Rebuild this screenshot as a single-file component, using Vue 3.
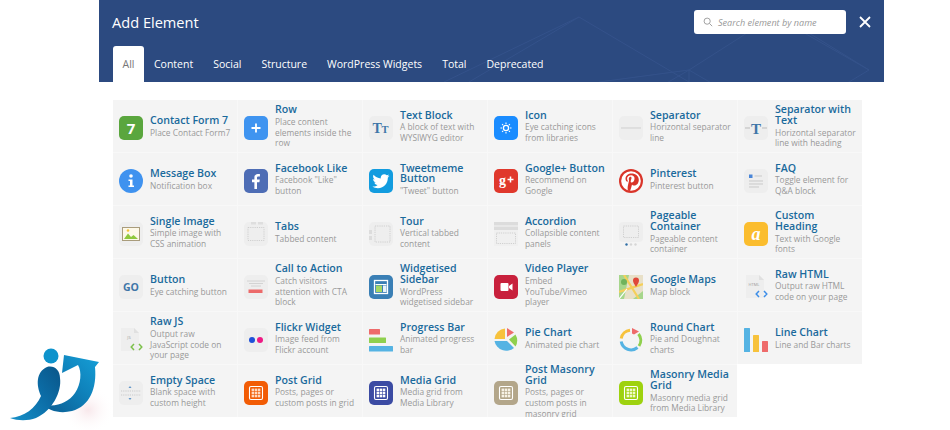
<template>
  <div class="page">
    <div class="modal">
      <header class="head">
        <svg class="pattern" viewBox="0 0 785 82">
          <path d="M370 82 L480 17 L590 82 M345 82 L480 17 M590 70 L648 33 M590 70 L500 82 M590 70 V82 M590 70 L650 105 M590 70 L530 105 M710 33 L770 70 L720 100 M770 70 L700 30" />
        </svg>
        <div class="top">
          <h1>Add Element</h1>
          <div class="tools">
            <div class="search">
              <svg viewBox="0 0 12 12" class="glass"><circle cx="5" cy="5" r="3.7" /><path d="M7.8 7.8 L11 11" /></svg>
              <span>Search element by name</span>
            </div>
            <svg viewBox="0 0 12 12" class="close"><path d="M1 1 L11 11 M11 1 L1 11" /></svg>
          </div>
        </div>
        <nav class="tabs">
          <a v-for="(tab, i) in tabs" :key="tab" :class="{ active: i === 0 }">{{ tab }}</a>
        </nav>
      </header>
    </div>

    <div class="grid">
      <div v-for="el in elements" :key="el.title" class="cell">
        <svg class="icon" viewBox="0 0 24 24" v-html="icons[el.icon]"></svg>
        <div class="info">
          <h3>{{ el.title }}</h3>
          <p>{{ el.desc }}</p>
        </div>
      </div>
    </div>

    <svg class="logo" viewBox="0 0 120 85">
      <defs>
        <linearGradient id="jg" x1="0" y1="1" x2="1" y2="0.2">
          <stop offset="0" stop-color="#1690c8" />
          <stop offset="0.6" stop-color="#0c6ea8" />
          <stop offset="1" stop-color="#0a5a8e" />
        </linearGradient>
        <linearGradient id="ag" x1="0" y1="1" x2="1" y2="0">
          <stop offset="0" stop-color="#0b5c92" />
          <stop offset="0.55" stop-color="#0f82bb" />
          <stop offset="1" stop-color="#16a0d8" />
        </linearGradient>
        <radialGradient id="haze">
          <stop offset="0" stop-color="#f6e2e6" stop-opacity="0.8" />
          <stop offset="1" stop-color="#fff" stop-opacity="0" />
        </radialGradient>
      </defs>
      <ellipse cx="88" cy="62" rx="26" ry="24" fill="url(#haze)" />
      <circle cx="51" cy="8" r="7.5" fill="#0e93cc" />
      <path fill="url(#ag)" d="M64 7 L99 14 L95 19 C97 40 90 58 72 63 C60 66 49 63 42 56 C55 60 68 55 75 45 C81 36 82 24 78 17 L62 25 Z" />
      <path fill="url(#jg)" d="M10 70 C24 69 36 60 41 48 C36 37 36 24 47 19 C54 17 60 22 60 30 C62 44 52 63 36 70 C28 73 18 73 10 70 Z" />
    </svg>
  </div>
</template>

<script setup>
const tabs = ['All', 'Content', 'Social', 'Structure', 'WordPress Widgets', 'Total', 'Deprecated']

const elements = [
  { icon: 'cf7', title: 'Contact Form 7', desc: 'Place Contact Form7' },
  { icon: 'row', title: 'Row', desc: 'Place content elements inside the row' },
  { icon: 'text', title: 'Text Block', desc: 'A block of text with WYSIWYG editor' },
  { icon: 'sun', title: 'Icon', desc: 'Eye catching icons from libraries' },
  { icon: 'sep', title: 'Separator', desc: 'Horizontal separator line' },
  { icon: 'septext', title: 'Separator with Text', desc: 'Horizontal separator line with heading' },
  { icon: 'info', title: 'Message Box', desc: 'Notification box' },
  { icon: 'fb', title: 'Facebook Like', desc: 'Facebook "Like" button' },
  { icon: 'tw', title: 'Tweetmeme Button', desc: '"Tweet" button' },
  { icon: 'gplus', title: 'Google+ Button', desc: 'Recommend on Google' },
  { icon: 'pin', title: 'Pinterest', desc: 'Pinterest button' },
  { icon: 'faq', title: 'FAQ', desc: 'Toggle element for Q&A block' },
  { icon: 'image', title: 'Single Image', desc: 'Simple image with CSS animation' },
  { icon: 'tabs', title: 'Tabs', desc: 'Tabbed content' },
  { icon: 'tour', title: 'Tour', desc: 'Vertical tabbed content' },
  { icon: 'accordion', title: 'Accordion', desc: 'Collapsible content panels' },
  { icon: 'pageable', title: 'Pageable Container', desc: 'Pageable content container' },
  { icon: 'heading', title: 'Custom Heading', desc: 'Text with Google fonts' },
  { icon: 'go', title: 'Button', desc: 'Eye catching button' },
  { icon: 'cta', title: 'Call to Action', desc: 'Catch visitors attention with CTA block' },
  { icon: 'sidebar', title: 'Widgetised Sidebar', desc: 'WordPress widgetised sidebar' },
  { icon: 'video', title: 'Video Player', desc: 'Embed YouTube/Vimeo player' },
  { icon: 'maps', title: 'Google Maps', desc: 'Map block' },
  { icon: 'html', title: 'Raw HTML', desc: 'Output raw HTML code on your page' },
  { icon: 'js', title: 'Raw JS', desc: 'Output raw JavaScript code on your page' },
  { icon: 'flickr', title: 'Flickr Widget', desc: 'Image feed from Flickr account' },
  { icon: 'progress', title: 'Progress Bar', desc: 'Animated progress bar' },
  { icon: 'pie', title: 'Pie Chart', desc: 'Animated pie chart' },
  { icon: 'round', title: 'Round Chart', desc: 'Pie and Doughnat charts' },
  { icon: 'bars', title: 'Line Chart', desc: 'Line and Bar charts' },
  { icon: 'space', title: 'Empty Space', desc: 'Blank space with custom height' },
  { icon: 'postgrid', title: 'Post Grid', desc: 'Posts, pages or custom posts in grid' },
  { icon: 'mediagrid', title: 'Media Grid', desc: 'Media grid from Media Library' },
  { icon: 'masonry', title: 'Post Masonry Grid', desc: 'Posts, pages or custom posts in masonry grid' },
  { icon: 'masonrymedia', title: 'Masonry Media Grid', desc: 'Masonry media grid from Media Library' },
]

const box = (fill) => `<rect width="24" height="24" rx="5" fill="${fill}"/>`
const grey = box('#eeeeee')

const gridIcon = (fill, cell) => {
  let dots = ''
  for (let r = 0; r < 3; r++) {
    for (let c = 0; c < 3; c++) {
      dots += `<rect x="${7.6 + c * 3.1}" y="${7.6 + r * 3.1}" width="2.5" height="2.5" fill="${cell}"/>`
    }
  }
  return box(fill) + `<rect x="5.5" y="5.5" width="13" height="13" rx="1.5" fill="none" stroke="#fff" stroke-width="1.1"/>` + dots
}

const doc = (label, color) => `<path d="M2 0 H15 L20 5 V23 H2 Z" fill="#eeeeee"/><path d="M15 0 L20 5 H15 Z" fill="#e0e0e0"/>
  <text x="10" y="11" font-size="4" text-anchor="middle" fill="#999" font-family="Open Sans">${label}</text>
  <path d="M15 16 L12.2 19 L15 22 M20 16 L22.8 19 L20 22" fill="none" stroke="${color}" stroke-width="1.5"/>`

const icons = {
  cf7: box('#5aa63e') + `<text x="12" y="18" font-size="15" font-weight="700" text-anchor="middle" fill="#fff" font-family="Open Sans">7</text>`,
  row: box('#3f94f0') + `<path d="M12 7.5 V16.5 M7.5 12 H16.5" stroke="#fff" stroke-width="1.8"/>`,
  text: grey + `<text x="3.5" y="17" font-size="14" font-weight="700" fill="#3f76a8" font-family="Liberation Serif">T</text><text x="12.5" y="17" font-size="10.5" font-weight="700" fill="#3f76a8" font-family="Liberation Serif">T</text>`,
  sun: box('#1a8cff') + `<circle cx="12" cy="12" r="2.6" fill="none" stroke="#fff" stroke-width="1.3"/><path d="M12 6.5 V8 M12 16 V17.5 M6.5 12 H8 M16 12 H17.5 M8.1 8.1 L9.1 9.1 M14.9 14.9 L15.9 15.9 M15.9 8.1 L14.9 9.1 M9.1 14.9 L8.1 15.9" stroke="#fff" stroke-width="1.1"/>`,
  sep: grey + `<path d="M2 12 H22" stroke="#cfcfcf" stroke-width="1"/>`,
  septext: grey + `<path d="M1 12 H6 M18 12 H23" stroke="#bbb" stroke-width="1"/><text x="12" y="17.5" font-size="15" font-weight="700" text-anchor="middle" fill="#3f76a8" font-family="Liberation Serif">T</text>`,
  info: `<circle cx="12" cy="12" r="12" fill="#3f92ef"/><circle cx="12" cy="7" r="1.8" fill="#fff"/><path d="M9.5 10.5 H13.5 V16.5 H15 V18 H9.5 V16.5 H11 V12 H9.5 Z" fill="#fff"/>`,
  fb: box('#4e6db5') + `<path d="M13 20 V13.2 H15.4 L15.8 10.4 H13 V8.8 C13 8 13.3 7.4 14.4 7.4 H15.9 V5 C15.6 5 14.8 4.9 13.9 4.9 C11.9 4.9 10.4 6.1 10.4 8.5 V10.4 H8 V13.2 H10.4 V20 Z" fill="#fff"/>`,
  tw: box('#129cdf') + `<path d="M20.5 6.8 C19.9 7.1 19.2 7.3 18.5 7.4 C19.2 7 19.8 6.3 20 5.5 C19.3 5.9 18.6 6.2 17.8 6.3 C17.1 5.6 16.2 5.2 15.2 5.2 C13.2 5.2 11.7 6.8 11.7 8.7 C11.7 9 11.7 9.2 11.8 9.5 C8.9 9.3 6.3 7.9 4.6 5.8 C4.3 6.3 4.1 6.9 4.1 7.6 C4.1 8.8 4.7 9.9 5.7 10.5 C5.1 10.5 4.6 10.3 4.1 10.1 C4.1 11.8 5.3 13.2 6.9 13.5 C6.4 13.7 5.8 13.7 5.3 13.6 C5.7 15 7 16 8.6 16 C7.4 17 5.8 17.6 4.2 17.6 H3.4 C5 18.6 6.9 19.2 8.9 19.2 C15.2 19.2 18.8 13.9 18.8 9.3 V8.8 C19.5 8.3 20 7.6 20.5 6.8 Z" fill="#fff"/>`,
  gplus: box('#e0382c') + `<text x="5" y="15.5" font-size="14" font-weight="700" fill="#fff" font-family="Liberation Serif">g</text><path d="M13.5 10.5 H19.5 M16.5 7.5 V13.5" stroke="#fff" stroke-width="1.5"/>`,
  pin: `<circle cx="12" cy="12" r="12" fill="#d9352a"/><circle cx="12" cy="12" r="9.8" fill="#fff"/><path d="M12.4 4.5 C8.5 4.5 6.5 7.2 6.5 9.6 C6.5 11 7 12.3 8.2 12.8 C8.6 13 8.8 12.6 8.9 12 C8.2 11 8.1 10.3 8.1 9.6 C8.1 7.8 9.7 6.2 12.1 6.2 C14.2 6.2 15.5 7.5 15.5 9.3 C15.5 11.6 14.4 13.5 13 13.5 C12.1 13.5 11.5 12.8 11.7 11.9 C12 10.9 12.5 9.8 12.5 9 C12.5 8.3 12.1 7.8 11.4 7.8 C10.5 7.8 9.8 8.8 9.8 10 C9.8 10.8 10.1 11.3 10.1 11.3 L8.8 17 C8.5 18.6 8.7 20.6 8.8 21.6 L11 22 C11.4 21 12 19.5 12.3 18.3 L13 15.4 C13.4 16 14.3 16.5 15.2 16.5 C17.9 16.5 19.8 14 19.8 10.7 C19.8 7.2 16.7 4.5 12.4 4.5 Z" fill="#d9352a"/>`,
  faq: grey + `<rect x="5" y="5.5" width="3.5" height="3.5" fill="#4a86d8"/><path d="M10.5 7 H18 M5 12 H19 M5 15 H19 M5 18 H15" stroke="#c9c9c9" stroke-width="1"/>`,
  image: grey + `<rect x="3.5" y="5.5" width="17" height="13" fill="#fdf8e8" stroke="#a99c7c" stroke-width="1"/><path d="M5 17 L9 11.5 L12 15 L14.5 13 L19 17 Z" fill="#8fc83c"/><circle cx="9" cy="8.5" r="1.3" fill="#f2c23a"/>`,
  tabs: grey + `<path d="M7 0 H12 V2.5 H7 Z M14 0 H19 V2.5 H14 Z" fill="#dedede"/><rect x="4" y="5.5" width="16" height="13" fill="none" stroke="#c8c8c8" stroke-width="0.8" stroke-dasharray="1.2 1"/>`,
  tour: grey + `<path d="M0 8 H3 V12 H0 Z M0 14 H3 V18 H0 Z" fill="#dcdcdc"/><rect x="6" y="4" width="15" height="16" fill="none" stroke="#c8c8c8" stroke-width="0.8" stroke-dasharray="1.2 1"/>`,
  accordion: `<rect y="0" width="24" height="3.5" fill="#dcdcdc"/><rect y="4.5" width="24" height="3.5" fill="#dcdcdc"/><rect y="8" width="24" height="16" fill="#f0f0f0"/><rect x="2.5" y="11" width="19" height="10.5" fill="none" stroke="#c8c8c8" stroke-width="0.8" stroke-dasharray="1.2 1"/>`,
  pageable: `<rect width="24" height="20" rx="4" fill="#eeeeee"/><rect x="4.5" y="4" width="15" height="11.5" fill="none" stroke="#c8c8c8" stroke-width="0.8" stroke-dasharray="1.2 1"/><circle cx="7.5" cy="22.5" r="1.2" fill="#2f6ea5"/><circle cx="12" cy="22.5" r="1.2" fill="#d6d6d6"/><circle cx="16.5" cy="22.5" r="1.2" fill="#d6d6d6"/>`,
  heading: box('#fbbd2e') + `<text x="12" y="18" font-size="18" font-style="italic" font-weight="700" text-anchor="middle" fill="#fff" font-family="Liberation Serif">a</text>`,
  go: grey + `<text x="12" y="15.8" font-size="10.5" font-weight="700" text-anchor="middle" fill="#3f76a8" font-family="Open Sans">GO</text>`,
  cta: grey + `<path d="M3 6 H21 M5 8.5 H19 M7 11 H17" stroke="#cfcfcf" stroke-width="0.9"/><rect x="4.5" y="14.5" width="14" height="3.5" fill="#ec6a6a"/>`,
  sidebar: box('#3a7fb5') + `<rect x="5.5" y="5.5" width="13" height="13" fill="none" stroke="#fff" stroke-width="1.3"/><rect x="6.5" y="9" width="11" height="1" fill="#fff"/><rect x="7" y="10.5" width="6" height="6.5" fill="#a6d864"/><rect x="14" y="10.5" width="3.5" height="6.5" fill="#e8f2fa"/>`,
  video: box('#c8203c') + `<rect x="6.5" y="8" width="8" height="8" rx="1" fill="#fff"/><path d="M15 11 L18.5 8.5 V15.5 L15 13 Z" fill="#fff"/>`,
  maps: `<rect width="24" height="24" fill="#e8e0c8"/><path d="M0 0 H10 L5 24 H0 Z" fill="#a6d68c"/><path d="M14 24 L24 16 V24 Z" fill="#a6d68c"/><path d="M0 17 L24 9 M5 0 L20 24" stroke="#f5cf5a" stroke-width="2.2"/><circle cx="5" cy="7" r="3" fill="#6fb35c"/><path d="M17 12 C15 8.5 14 7.5 14 5.5 A3 3 0 0 1 20 5.5 C20 7.5 19 8.5 17 12 Z" fill="#e0483a"/><path d="M0 24 L8 14" stroke="#fff" stroke-width="1.2"/>`,
  html: doc('HTML', '#3d8ee8'),
  js: doc('JS', '#7cc04a'),
  flickr: grey + `<circle cx="8" cy="12" r="3" fill="#1e50d8"/><circle cx="16" cy="12" r="3" fill="#ee1a84"/>`,
  progress: `<rect x="0" y="1" width="11" height="5.5" rx="0.5" fill="#ee6b6b"/><rect x="0" y="9.5" width="17" height="5.5" rx="0.5" fill="#8fd04e"/><rect x="0" y="18" width="24" height="5.5" rx="0.5" fill="#55b3e3"/>`,
  pie: `<path d="M11 0.5 A11.5 11.5 0 0 0 0.5 11 H11 Z" fill="#f7c23c"/><path d="M13 0 L20 4.5 L13 9 Z" fill="#ee6b6b"/><path d="M15 11.5 L21.5 6.5 A12 12 0 0 1 21.5 18.5 Z" fill="#8fd04e"/><path d="M0.5 13 H13 L20 20 A12 12 0 0 1 0.5 13 Z" fill="#55b3e3"/>`,
  round: `<g fill="none" stroke-width="3"><path d="M2.2 10.5 A10 10 0 0 1 11 2.2" stroke="#f7c23c"/><path d="M19.5 6 A10 10 0 0 1 20 18" stroke="#8fd04e"/><path d="M18.5 19.5 A10 10 0 0 1 2.2 13.5" stroke="#55b3e3"/></g><path d="M13 0 L20 3.5 L15 6.5 L13 5.5 Z" fill="#ee6b6b"/>`,
  bars: `<rect x="0" y="0" width="6" height="24" rx="0.5" fill="#55b3e3"/><rect x="9" y="7" width="6" height="17" rx="0.5" fill="#f7c23c"/><rect x="18" y="13" width="6" height="11" rx="0.5" fill="#ee6b6b"/>`,
  space: grey + `<path d="M2 10 H22 M2 14 H22" stroke="#bbb" stroke-width="0.7" stroke-dasharray="1.2 1"/><path d="M9.5 7 L11 5 L12.5 7 Z M9.5 17 L11 19 L12.5 17 Z" fill="#5f94c8"/>`,
  postgrid: gridIcon('#f25c05', '#ffd9c0'),
  mediagrid: gridIcon('#3b4ba3', '#ffffff'),
  masonry: gridIcon('#b3a68a', '#f7f2e6'),
  masonrymedia: gridIcon('#9ed20f', '#f0fac8'),
}
</script>

<style scoped>
.page {
  position: relative;
  width: 950px;
  height: 430px;
  overflow: hidden;
  font-family: 'Open Sans', sans-serif;
  background: #fff;
}

.modal {
  padding-left: 99px;
}

.head {
  position: relative;
  width: 785px;
  height: 82px;
  background: #2c4a80;
  overflow: hidden;
}

.pattern {
  position: absolute;
  left: 0;
  top: 0;
  width: 785px;
  height: 82px;
}

.pattern path {
  fill: none;
  stroke: #34528a;
  stroke-width: 1;
}

.top {
  position: relative;
  display: flex;
  justify-content: space-between;
  align-items: center;
  height: 46px;
  padding: 0 13px 2px 13px;
  box-sizing: border-box;
}

h1 {
  margin: 0;
  font-size: 14.6px;
  font-weight: 400;
  color: #fff;
}

.tools {
  display: flex;
  align-items: center;
  gap: 13px;
}

.search {
  display: flex;
  align-items: center;
  gap: 5px;
  box-sizing: border-box;
  width: 152px;
  height: 24px;
  padding-left: 9px;
  background: #fff;
  border-radius: 3px;
  font-size: 9.1px;
  font-style: italic;
  color: #999;
}

.glass {
  width: 10px;
  height: 10px;
  fill: none;
  stroke: #999;
  stroke-width: 1.1;
}

.close {
  width: 12px;
  height: 12px;
  fill: none;
  stroke: #fff;
  stroke-width: 1.8;
}

.tabs {
  position: relative;
  display: flex;
  padding-left: 14px;
  height: 36px;
}

.tabs a {
  display: flex;
  align-items: center;
  padding: 0 10px;
  font-size: 10.5px;
  font-weight: 500;
  color: #fff;
}

.tabs a.active {
  padding: 0 9.5px;
  background: #fff;
  color: #777;
  border-radius: 3px 3px 0 0;
}

.grid {
  display: grid;
  grid-template-columns: repeat(6, 124px);
  grid-auto-rows: 52px;
  column-gap: 1px;
  row-gap: 1px;
  width: 749px;
  height: 317px;
  margin: 18px 0 0 113px;
  overflow: hidden;
  background: linear-gradient(#f8f8f8, #f8f8f8) no-repeat 0 0 / 100% 264px, linear-gradient(#f8f8f8, #f8f8f8) no-repeat 0 264px / 624px 53px;
}

.cell {
  display: flex;
  align-items: center;
  gap: 7px;
  padding: 1px 5px 0 6px;
  box-sizing: border-box;
  background: #f4f4f4;
  min-width: 0;
}

.icon {
  flex: none;
  width: 24px;
  height: 24px;
  margin-top: 3px;
}

.info {
  flex: 1;
  min-width: 0;
}

h3 {
  margin: 0 0 2px;
  font-size: 10.6px;
  font-weight: 600;
  line-height: 10.7px;
  color: #1a6a9c;
}

p {
  margin: 0;
  font-size: 8.4px;
  line-height: 10.6px;
  color: #999;
}

.logo {
  position: absolute;
  left: 0;
  top: 348px;
  width: 120px;
  height: 85px;
}
</style>
